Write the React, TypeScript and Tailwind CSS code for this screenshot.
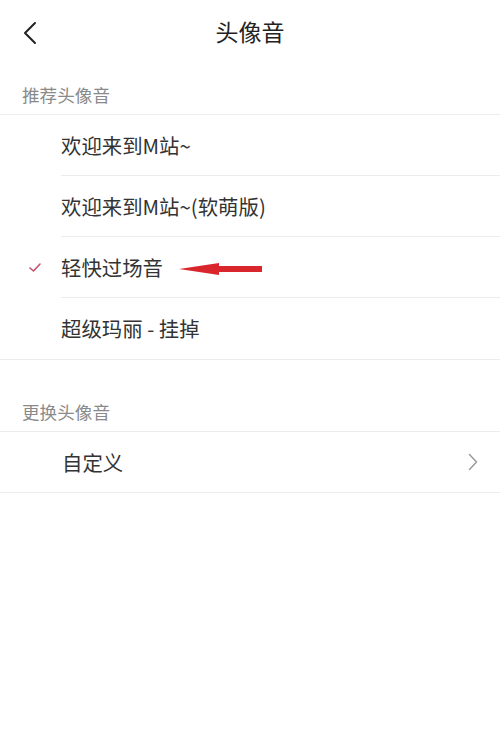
import React from "react";

const font = { fontFamily: '"Noto Sans CJK SC", "Noto Sans", sans-serif' };

function Row({ label, checked, arrow, last }: { label: string; checked?: boolean; arrow?: boolean; last?: boolean }) {
  return (
    <div className="flex h-[61px] items-stretch">
      <div className="flex w-[61px] shrink-0 items-center justify-center pl-[9px]">
        {checked && (
          <svg width="12" height="9" viewBox="0 0 12 9">
            <path d="M1 5 L4.5 8 L11 1" fill="none" stroke="#c8506a" strokeWidth="1.6" strokeLinecap="round" strokeLinejoin="round" />
          </svg>
        )}
      </div>
      <div className={`flex flex-1 items-center ${last ? "" : "border-b border-[#ececec]"}`}>
        <span className="text-[20.4px] leading-none text-[#333]">{label}</span>
        {arrow && (
          <svg className="ml-[16px] mt-[3px]" width="84" height="14" viewBox="0 0 84 14">
            <path d="M0 7 L40 1 L40 4 L83 4 L83 10 L40 10 L40 13 Z" fill="#d8262c" />
          </svg>
        )}
      </div>
    </div>
  );
}

export default function App() {
  return (
    <div className="h-[744px] w-[500px] bg-white" style={font}>
      <div className="relative flex h-[68px] items-center justify-center pb-[5px]">
        <svg className="absolute left-[22px] top-[21px]" width="16" height="24" viewBox="0 0 16 24">
          <path d="M13 2 L3 12 L13 22" fill="none" stroke="#222" strokeWidth="2" strokeLinecap="round" strokeLinejoin="round" />
        </svg>
        <span className="text-[23px] text-[#222]">头像音</span>
      </div>
      <div className="flex h-[47px] items-end border-b border-[#ececec] pb-[8px] pl-[22px]">
        <span className="text-[17.6px] leading-[22px] text-[#8a8a8a]">推荐头像音</span>
      </div>
      <div className="border-b border-[#ececec]">
        <Row label="欢迎来到M站~" />
        <Row label="欢迎来到M站~(软萌版)" />
        <Row label="轻快过场音" checked arrow />
        <Row label="超级玛丽 - 挂掉" last />
      </div>
      <div className="flex h-[72px] items-end border-b border-[#ececec] pb-[8px] pl-[22px]">
        <span className="text-[17.6px] leading-[22px] text-[#8a8a8a]">更换头像音</span>
      </div>
      <div className="flex h-[61px] items-center justify-between border-b border-[#ececec] pl-[62px] pr-[22px]">
        <span className="text-[20.4px] leading-none text-[#333]">自定义</span>
        <svg width="10" height="18" viewBox="0 0 10 18">
          <path d="M1.5 1.5 L8.5 9 L1.5 16.5" fill="none" stroke="#9a9a9a" strokeWidth="1.5" strokeLinecap="round" strokeLinejoin="round" />
        </svg>
      </div>
    </div>
  );
}
